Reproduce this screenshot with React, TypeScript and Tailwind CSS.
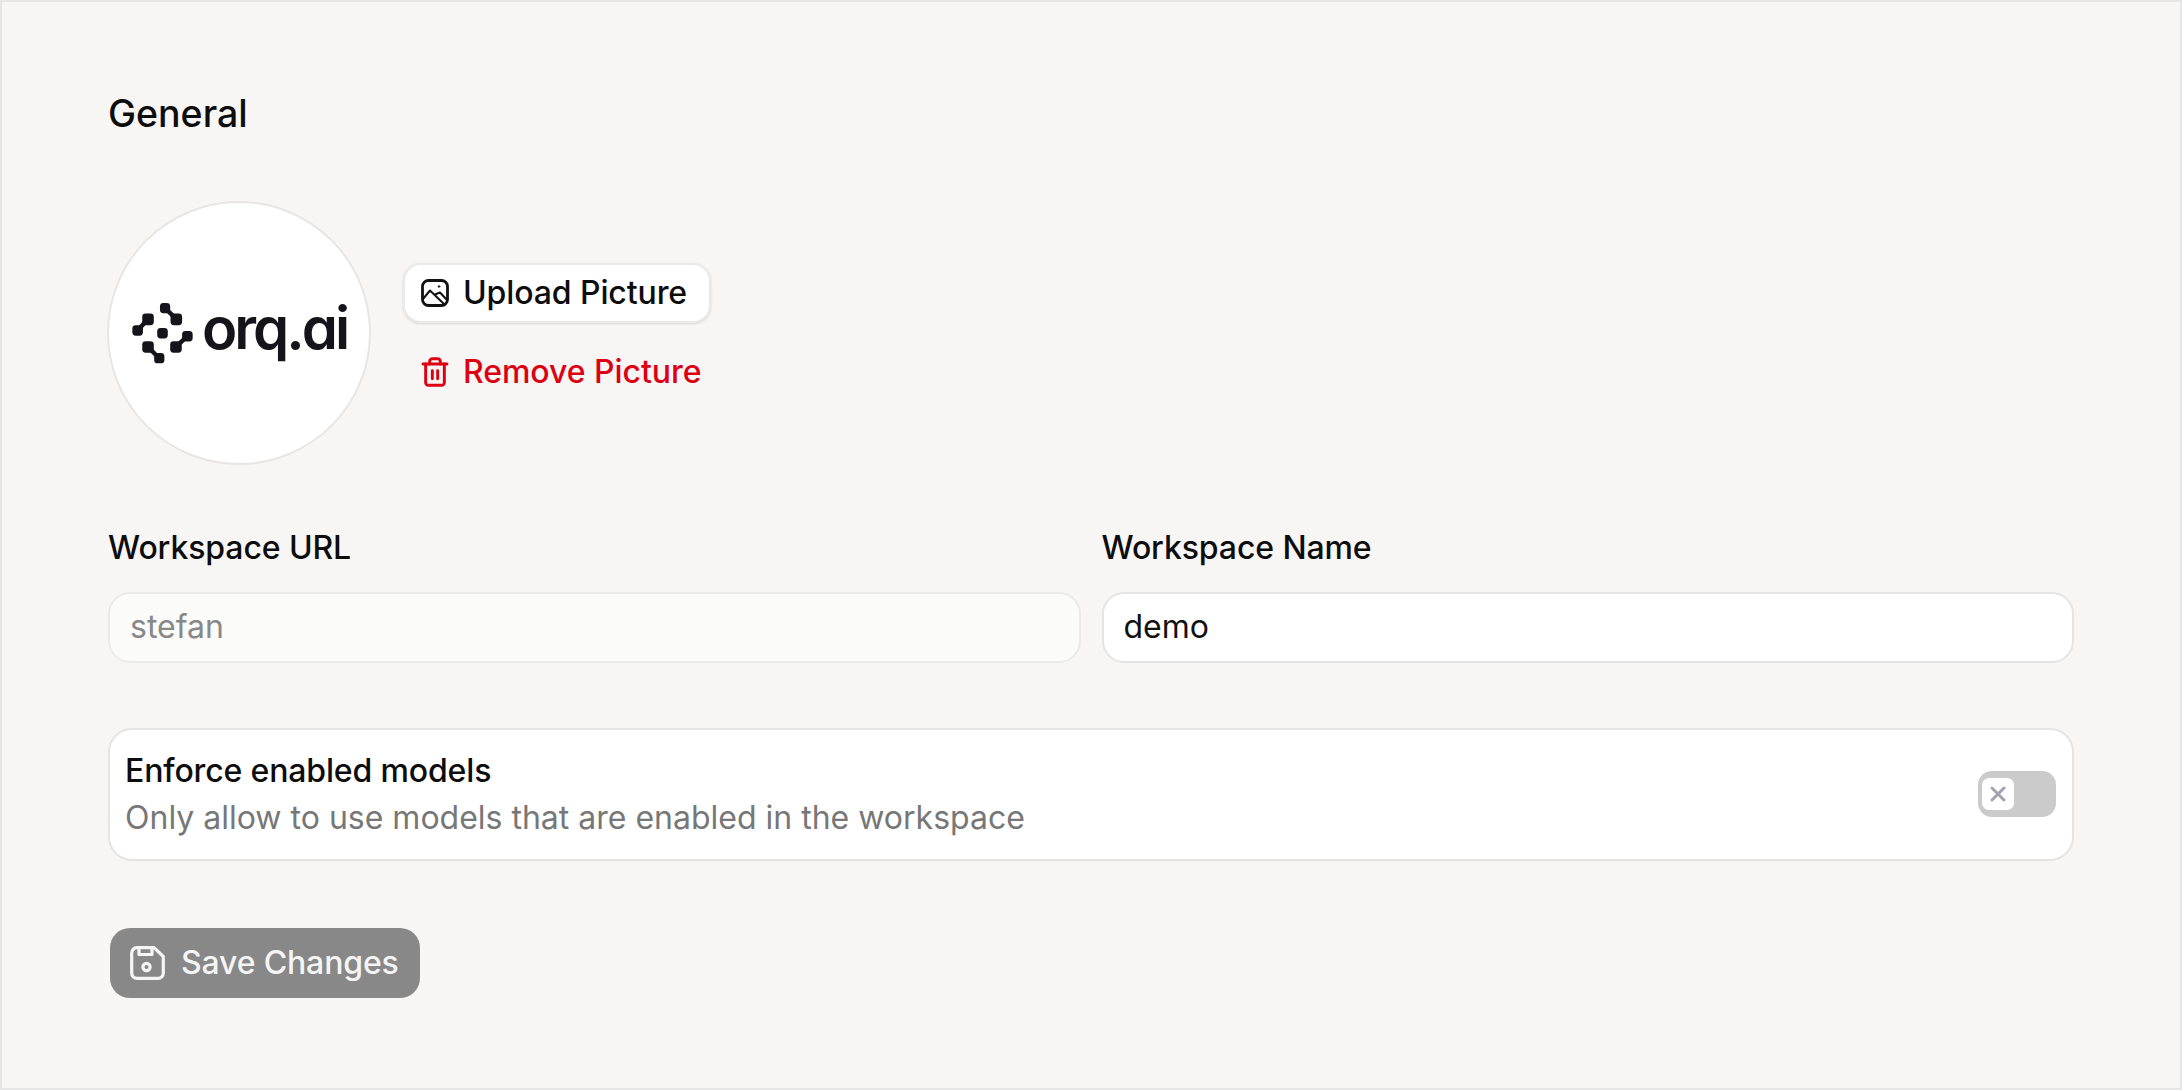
import React from 'react';
import { Trash2, X } from 'lucide-react';

const OrqLogo = () => (
  <div className="flex items-center gap-[9px]">
    <svg width="62" height="62" viewBox="0 0 182 182" fill="#14141a" stroke="none">
      <g stroke="#14141a" strokeWidth="13">
        <line x1="100" y1="18" x2="133" y2="50" />
        <line x1="50" y1="50" x2="20" y2="83" />
        <line x1="165" y1="100" x2="132" y2="132" />
        <line x1="50" y1="132" x2="83" y2="165" />
      </g>
      <rect x="85" y="3" width="30" height="30" rx="10" />
      <rect x="116" y="34" width="34" height="34" rx="10" />
      <rect x="33" y="34" width="34" height="34" rx="10" />
      <rect x="4" y="68" width="31" height="31" rx="10" />
      <rect x="77" y="76" width="31" height="31" rx="10" />
      <rect x="150" y="85" width="31" height="31" rx="10" />
      <rect x="115" y="115" width="34" height="34" rx="10" />
      <rect x="33" y="115" width="34" height="34" rx="10" />
      <rect x="68" y="150" width="30" height="30" rx="10" />
    </svg>
    <span className="mb-[10px] text-[58px] leading-none font-semibold tracking-[-3px] text-[#14141a] [font-feature-settings:'cv11']">orq.ai</span>
  </div>
);

const PictureIcon = () => (
  <svg width="28" height="28" viewBox="0 0 28 28" fill="none" stroke="#111111" strokeWidth="2.8" strokeLinejoin="round" strokeLinecap="round">
    <rect x="1.5" y="1.5" width="25" height="25" rx="6" />
    <path d="M2 20 L9 11.5 L23.5 25.5 M14 15.5 L19 13.5 L26 21" strokeWidth="2" />
    <circle cx="18" cy="7.5" r="0.8" fill="#111111" strokeWidth="1" />
  </svg>
);

const SaveIcon = () => (
  <svg width="35" height="34" viewBox="0 0 35 34" fill="none" stroke="#f5f5f5" strokeWidth="3.2" strokeLinejoin="round" strokeLinecap="round">
    <path d="M7 1.7 H24 L33.3 10.5 V27 A5.3 5.3 0 0 1 28 32.3 H7 A5.3 5.3 0 0 1 1.7 27 V7 A5.3 5.3 0 0 1 7 1.7 Z" />
    <path d="M9 2 V8.5 H22 V2" />
    <circle cx="16.5" cy="21" r="3.6" />
  </svg>
);

export default function App() {
  return (
    <div className="w-full h-[1090px] border-2 border-[#e7e6e5] bg-[#f7f6f5] px-[106px] pt-[92px] font-['Inter','Liberation_Sans',sans-serif] text-[#0d0d0d]">
      {/* Header */}
      <h1 className="text-[37.5px] leading-10 font-medium">General</h1>

      {/* Picture */}
      <div className="mt-[67px] -ml-[1px] flex items-center gap-[32px]">
        <div className="flex h-[264px] w-[264px] items-center justify-center rounded-full border-2 border-[#e7e6e5] bg-white">
          <OrqLogo />
        </div>
        <div className="mb-[12px] flex flex-col items-start gap-[29px]">
          <button className="flex h-[60px] w-[308px] items-center gap-[14px] rounded-[18px] border-2 border-[#ebeaea] bg-white pl-[16px] text-[32px] font-medium tracking-[-0.1px] shadow-sm">
            <PictureIcon />
            <span>Upload Picture</span>
          </button>
          <button className="flex h-[40px] items-center gap-[12px] pl-[16px] text-[32px] font-medium tracking-[-0.05px] text-[#dc0012]">
            <Trash2 className="w-[32px] h-[32px]" strokeWidth={2.2} />
            <span>Remove Picture</span>
          </button>
        </div>
      </div>

      {/* Fields */}
      <div className="mt-[63px] grid grid-cols-2 gap-x-[21px]">
        <div>
          <label className="block text-[32px] leading-10 font-medium tracking-[-0.1px]">Workspace URL</label>
          <input
            readOnly
            value="stefan"
            className="mt-[24px] h-[71px] w-full rounded-[22px] border-2 border-[#eaeaea] bg-[#fbfbfa] px-[20px] pb-[2px] text-[32px] text-[#888888] outline-none"
          />
        </div>
        <div>
          <label className="block text-[32px] leading-10 font-medium tracking-[-0.1px]">Workspace Name</label>
          <input
            readOnly
            value="demo"
            className="mt-[24px] h-[71px] w-full rounded-[22px] border-2 border-[#e4e4e4] bg-white px-[20px] pb-[2px] text-[32px] text-[#111111] outline-none"
          />
        </div>
      </div>

      {/* Enforce models */}
      <div className="mt-[65px] flex h-[133px] items-center justify-between rounded-[24px] border-2 border-[#e4e4e4] bg-white pl-[15px] pr-[16px]">
        <div className="mb-[1px]">
          <div className="text-[32px] leading-[47px] font-medium tracking-[-0.15px]">Enforce enabled models</div>
          <div className="text-[32px] leading-[47px] text-[#777777]">Only allow to use models that are enabled in the workspace</div>
        </div>
        <div className="mb-[1px] flex h-[46px] w-[78px] items-center rounded-[14px] bg-[#cbcbcb] pl-[4px]">
          <div className="flex h-[32px] w-[32px] items-center justify-center rounded-[7px] bg-white">
            <X className="w-[24px] h-[24px] text-[#a3a3b3]" strokeWidth={3} />
          </div>
        </div>
      </div>

      {/* Save */}
      <button className="mt-[67px] ml-[2px] flex h-[70px] w-[310px] items-center gap-[16px] rounded-[20px] bg-[#888888] pl-[20px] text-[32px] font-medium tracking-[-0.15px] text-[#f5f5f5]">
        <SaveIcon />
        <span>Save Changes</span>
      </button>
    </div>
  );
}
